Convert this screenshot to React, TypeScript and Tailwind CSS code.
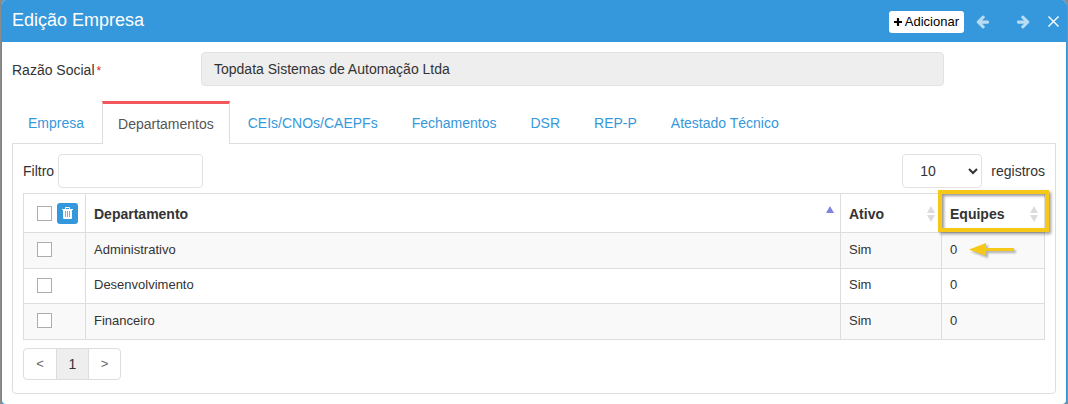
import { useState } from 'react';
import clsx from 'clsx';

interface Department {
  active: string;
  name: string;
  teams: number;
}

const tabs = [
  'Empresa',
  'Departamentos',
  'CEIs/CNOs/CAEPFs',
  'Fechamentos',
  'DSR',
  'REP-P',
  'Atestado Técnico',
];

const departments: Department[] = [
  { active: 'Sim', name: 'Administrativo', teams: 0 },
  { active: 'Sim', name: 'Desenvolvimento', teams: 0 },
  { active: 'Sim', name: 'Financeiro', teams: 0 },
];

const checkboxClassName =
  'block size-[15px] shrink-0 appearance-none border border-[#adadad] bg-white checked:bg-[#3598dc]';

const PlusIcon = () => (
  <svg aria-hidden className="h-[10px] w-2" fill="currentColor" viewBox="192 128 1408 1408">
    <path d="M1600 736v192q0 40-28 68t-68 28h-416v416q0 40-28 68t-68 28h-192q-40 0-68-28t-28-68v-416h-416q-40 0-68-28t-28-68v-192q0-40 28-68t68-28h416v-416q0-40 28-68t68-28h192q40 0 68 28t28 68v416h416q40 0 68 28t28 68z" />
  </svg>
);

const ArrowIcon = ({ className }: { className?: string }) => (
  <svg
    aria-hidden
    className={clsx('size-[15px]', className)}
    fill="currentColor"
    viewBox="0 0 1792 1792"
  >
    <path d="M1664 896v128q0 53-32.5 90.5t-84.5 37.5h-704l293 294q38 36 38 90t-38 90l-75 76q-37 37-90 37-52 0-91-37l-651-652q-37-37-37-90 0-52 37-91l651-650q38-38 91-38 52 0 90 38l75 74q38 38 38 91t-38 91l-293 293h704q52 0 84.5 37.5t32.5 90.5z" />
  </svg>
);

const CloseIcon = () => (
  <svg aria-hidden className="size-[11px]" stroke="currentColor" strokeWidth="1.4" viewBox="0 0 11 11">
    <path d="M.5.5l10 10M10.5.5l-10 10" />
  </svg>
);

const TrashIcon = () => (
  <svg aria-hidden viewBox="0 0 11 12" className="h-3 w-[11px]" fill="currentColor">
    <path d="M3 2V1q0-1 1-1h3q1 0 1 1v1h3v1h-1v8q0 1-1 1H2q-1 0-1-1V3H0V2zM4 2h3V1H4z" fillRule="evenodd" />
    <path d="M3 4h1v6H3zM5 4h1v6H5zM7 4h1v6H7z" fill="#8fa5ea" />
  </svg>
);

const SortIcon = ({ ascending }: { ascending?: boolean }) => (
  <svg aria-hidden className="h-4 w-2 shrink-0" viewBox="0 0 8 16">
    <path d="M0 7L4 0l4 7z" fill={ascending ? '#7f83df' : '#dcdcdc'} />
    {!ascending && <path d="M0 9h8l-4 7z" fill="#dcdcdc" />}
  </svg>
);

const Header = () => (
  <header className="flex h-[42px] items-center bg-[#3598dc] pr-[7px] pl-[10px] text-white">
    <h1 className="grow pb-[2px] text-[18px] leading-6">Edição Empresa</h1>
    <button
      className="mt-[2px] mr-[11px] flex h-[22px] items-center gap-[3px] rounded-[3px] bg-white px-[5px] text-[13px] text-black"
      type="button"
    >
      <PlusIcon />
      Adicionar
    </button>
    <button aria-label="Anterior" className="mr-[26px] text-[#b9dbf3]" type="button">
      <ArrowIcon />
    </button>
    <button aria-label="Próximo" className="mr-[17px] text-[#b9dbf3]" type="button">
      <ArrowIcon className="-scale-x-100" />
    </button>
    <button aria-label="Fechar" type="button">
      <CloseIcon />
    </button>
  </header>
);

const DepartmentTable = () => (
  <table className="w-full table-fixed border-collapse text-left text-[13px] [&_td]:border [&_td]:border-[#ddd] [&_td]:px-2 [&_td]:pb-[2px] [&_th]:border [&_th]:border-[#ddd] [&_th]:px-2">
    <colgroup>
      <col className="w-[62px]" />
      <col />
      <col className="w-[101px]" />
      <col className="w-[103px]" />
    </colgroup>
    <thead>
      <tr className="h-[39px] text-[14px]">
        <th>
          <div className="flex items-center gap-[5px] pl-[5px]">
            <input aria-label="Selecionar todos" className={checkboxClassName} type="checkbox" />
            <button
              aria-label="Excluir"
              className="flex size-[21px] shrink-0 items-center justify-center rounded-[3px] bg-[#3598dc] text-white"
              type="button"
            >
              <TrashIcon />
            </button>
          </div>
        </th>
        <th>
          <div className="-mr-[2px] flex items-center justify-between pt-[2px]">
            Departamento
            <SortIcon ascending />
          </div>
        </th>
        <th>
          <div className="-mr-[2px] flex items-center justify-between pt-[2px]">
            Ativo
            <SortIcon />
          </div>
        </th>
        <th className="relative">
          <div className="-mr-[2px] flex items-center justify-between pt-[2px]">
            Equipes
            <SortIcon />
          </div>
          <div className="pointer-events-none absolute -top-1 -right-[5px] bottom-0 -left-1 border-4 border-[#f6c817] shadow-[2px_2px_3px_rgba(0,0,0,0.4),inset_2px_2px_3px_rgba(0,0,0,0.4)]" />
        </th>
      </tr>
    </thead>
    <tbody>
      {departments.map(({ active, name, teams }, index) => (
        <tr className="h-9 odd:bg-[#f9f9f9] even:h-[35px]" key={name}>
          <td>
            <input
              aria-label={`Selecionar ${name}`}
              className={clsx(checkboxClassName, 'ml-[5px]')}
              type="checkbox"
            />
          </td>
          <td>{name}</td>
          <td>{active}</td>
          <td>
            <div className="flex items-center gap-3">
              {teams}
              {index === 0 && (
                <svg
                  aria-hidden
                  className="h-[13px] w-[46px] overflow-visible drop-shadow-[2px_2px_1px_rgba(0,0,0,0.3)]"
                  viewBox="0 0 46 13"
                >
                  <path d="M0 6.500L17 0v5h28v3H17v5z" fill="#f6c817" />
                </svg>
              )}
            </div>
          </td>
        </tr>
      ))}
    </tbody>
  </table>
);

const Pagination = () => (
  <nav
    aria-label="Paginação"
    className="mt-2 inline-flex h-8 divide-x divide-[#ddd] overflow-hidden rounded-[4px] border border-[#ddd] text-[#666]"
  >
    <button aria-label="Página anterior" className="w-[33px] text-[13px]" type="button">
      &lt;
    </button>
    <button aria-current="page" className="w-8 bg-[#eee] text-[14px] text-[#333]" type="button">
      1
    </button>
    <button aria-label="Próxima página" className="w-[31px] text-[13px]" type="button">
      &gt;
    </button>
  </nav>
);

export default function App() {
  const [activeTab, setActiveTab] = useState('Departamentos');

  return (
    <div className="h-screen overflow-hidden bg-[#8b8b8b] px-px font-['Liberation_Sans',Arial,sans-serif] text-[14px] leading-5 text-[#333]">
      <main className="overflow-hidden rounded-[5px] border-x border-b border-[#3598dc] bg-white">
        <Header />
        <div className="px-[10px] pt-[10px] pb-[10px]">
          <div className="flex items-center pr-[112px]">
            <label className="w-[189px] shrink-0 pt-[2px]" htmlFor="company">
              Razão Social<span className="ml-[2px] text-[12px] text-[#e02222]">*</span>
            </label>
            <input
              className="h-[34px] min-w-0 grow rounded-[4px] border border-[#e2e2e2] bg-[#eee] px-3"
              defaultValue="Topdata Sistemas de Automação Ltda"
              id="company"
              readOnly
            />
          </div>

          <div className="mt-[15px] flex h-[42px] gap-[2px]" role="tablist">
            {tabs.map((tab) => (
              <button
                aria-selected={tab === activeTab}
                className={clsx(
                  'h-[43px] border-x px-[15px] whitespace-nowrap',
                  tab === activeTab
                    ? 'relative z-10 border-t-3 border-x-[#ddd] border-t-[#f3565d] bg-white text-[#555]'
                    : 'border-transparent text-[#3598dc]',
                )}
                key={tab}
                onClick={() => setActiveTab(tab)}
                role="tab"
                type="button"
              >
                {tab}
              </button>
            ))}
          </div>

          <section
            className="rounded-b-[4px] border border-[#ddd] p-[10px] pb-[13px]"
            role="tabpanel"
          >
            <div className="mb-[5px] flex items-center justify-between">
              <label className="flex items-center gap-1">
                Filtro
                <input
                  className="h-[34px] w-[145px] rounded-[4px] border border-[#e2e2e2] px-3"
                  type="text"
                />
              </label>
              <label className="flex items-center gap-[9px]">
                <select
                  className="h-[34px] w-20 rounded-[4px] border border-[#e2e2e2] bg-white pl-[13px]"
                  defaultValue="10"
                >
                  <option>10</option>
                  <option>25</option>
                  <option>50</option>
                </select>
                registros
              </label>
            </div>
            <DepartmentTable />
            <Pagination />
          </section>
        </div>
      </main>
    </div>
  );
}
